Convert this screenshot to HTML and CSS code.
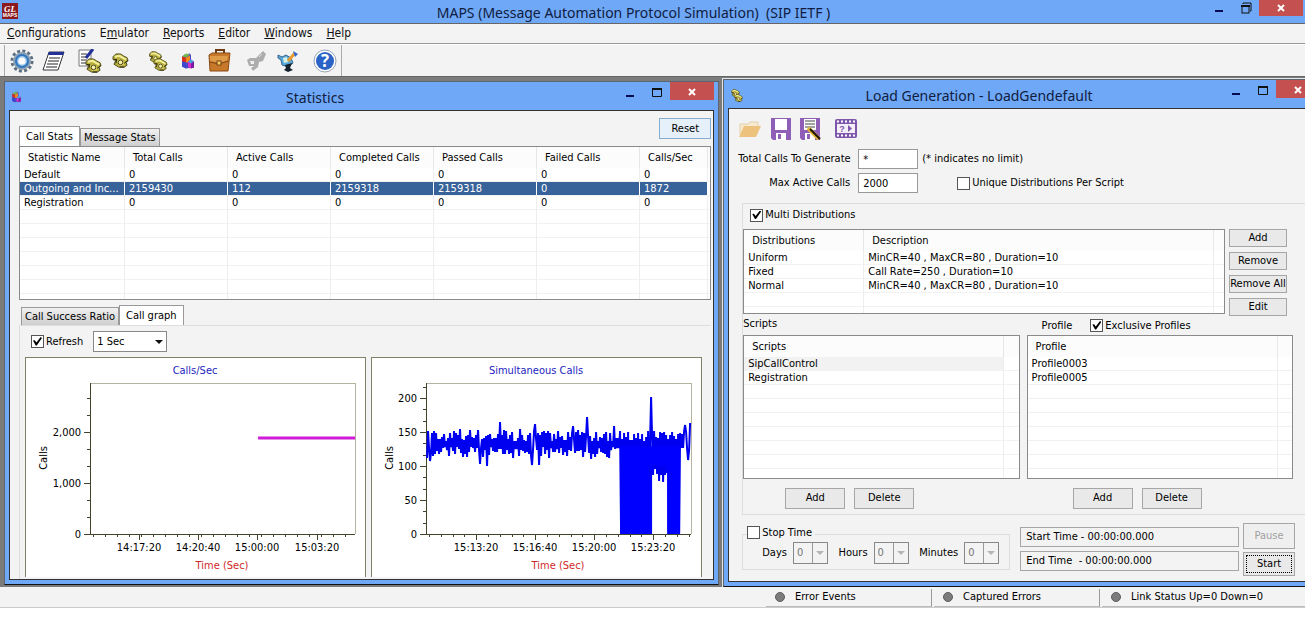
FILE: index.html
```html
<!DOCTYPE html>
<html lang="en">
<head>
    <meta charset="utf-8">
    <title>MAPS (Message Automation Protocol Simulation)</title>
    <link rel="stylesheet" href="styles.css">
</head>
<body>
    <!-- Shared icon shapes -->
    <svg class="symbols" width="0" height="0" aria-hidden="true">
        <symbol id="phone" viewBox="0 0 18 16">
            <path d="M1 4 L4 1 L9 1 L12 3 L16 5 L17 8 L15 10 L16 13 L13 15 L7 15 L2 12 L4 8 L1 7 Z" fill="#b8ae3c" stroke="#4b4718"/>
            <path d="M3 4 L8 3 L15 7" fill="none" stroke="#f4ef9c" stroke-width="2"/>
            <path d="M5 9 L8 6 L13 9 L13 13 L8 14 Z" fill="#d8cf60"/>
            <circle cx="9" cy="10" r="2.500" fill="#f6f0a8" stroke="#3b3810"/>
            <path d="M2 7 L5 7 L4 11 M13 11 L17 8 M8 15 L13 15" fill="none" stroke="#222008"/>
        </symbol>
        <symbol id="blocks" viewBox="0 0 14 17">
            <path d="M1 4 L4 2 L9 1 L10 3 L10 15 L5 16 L1 14 Z" fill="#4a46c8"/>
            <path d="M1 4 L5 5 L5 10 L1 9 Z" fill="#d82f20"/>
            <path d="M5 5 L9 3 L9 10 L5 10 Z" fill="#f08a1c"/>
            <path d="M1 4 L5 1 L9 2 L5 5 Z" fill="#72b84a"/>
            <path d="M1 9 L5 10 L5 16 L1 14 Z" fill="#3c48d0"/>
            <path d="M7 9 L10 7 L13 9 L13 15 L9 16 L7 14 Z" fill="#d630c8"/>
            <path d="M7 9 L10 7 L13 9 L10 11 Z" fill="#3ba8d8"/>
            <path d="M10 11 L13 9 L13 15 L10 16 Z" fill="#7a1aa0"/>
        </symbol>
    </svg>

    <header class="titlebar app-title">
        <svg class="app-logo" width="16" height="16" viewBox="0 0 16 16">
            <rect width="16" height="16" fill="#8b1a1f"/>
            <text class="logo-big" x="8" y="9" text-anchor="middle">GL</text>
            <text class="logo-small" x="8" y="14" text-anchor="middle">MAPS</text>
        </svg>
        <h1>MAPS (Message Automation Protocol Simulation)&nbsp; (SIP IETF )</h1>
        <div class="win-buttons">
            <button class="win-btn" aria-label="Minimize"><svg width="14" height="14"><path d="M3 10 H11" stroke="#0a0a50" stroke-width="2"/></svg></button>
            <button class="win-btn" aria-label="Restore"><svg width="14" height="14"><path d="M4 3 V2 H12 V10 H11" fill="none" stroke="#111"/><rect x="3" y="5" width="7" height="7" fill="none" stroke="#111"/><path d="M2 5 H11" stroke="#111" stroke-width="2"/></svg></button>
            <button class="win-btn close" aria-label="Close"><svg width="14" height="14"><path d="M4 4 L10 10 M10 4 L4 10" stroke="#fff" stroke-width="2"/></svg></button>
        </div>
    </header>

    <nav class="menubar">
        <a href="#"><u>C</u>onfigurations</a>
        <a href="#">E<u>m</u>ulator</a>
        <a href="#"><u>R</u>eports</a>
        <a href="#"><u>E</u>ditor</a>
        <a href="#"><u>W</u>indows</a>
        <a href="#"><u>H</u>elp</a>
    </nav>

    <div class="toolbar">
        <div class="tools">
            <div class="tool-group">
                <button aria-label="Settings">
                    <svg width="24" height="24" viewBox="0 0 24 24">
                        <circle cx="12" cy="12" r="10" fill="none" stroke="#5c6f80" stroke-width="3" stroke-dasharray="3 2.236"/>
                        <circle cx="12" cy="12" r="9" fill="#8fa3b5"/>
                        <circle cx="12" cy="12" r="7" fill="#2f78c0"/>
                        <circle cx="12" cy="12" r="5" fill="#9cc8ea"/>
                        <circle cx="12" cy="12" r="3.5" fill="#fff"/>
                    </svg>
                </button>
                <button aria-label="Script list">
                    <svg width="24" height="24" viewBox="0 0 24 24">
                        <path d="M8 3 L23 3 L17 21 L2 21 Z" fill="#fff" stroke="#33363c"/>
                        <path d="M8 3 L23 3 L22 6 L7 6 Z" fill="#23309a"/>
                        <path d="M8 9 H19 M7 12 H18 M6 15 H17 M5 18 H16" stroke="#222"/>
                    </svg>
                </button>
            </div>
            <div class="tool-group">
                <button aria-label="Edit call">
                    <svg width="24" height="24" viewBox="0 0 24 24">
                        <path d="M1 1 H13 V17 H1 Z" fill="#fff" stroke="#777"/>
                        <path d="M3 5 H9 M3 8 H8 M3 11 H9 M3 14 H8" stroke="#333"/>
                        <path d="M15 0 L8 9" stroke="#23309a" stroke-width="3"/>
                        <use href="#phone" x="7" y="9" width="17" height="15"/>
                    </svg>
                </button>
                <button aria-label="Call"><svg width="24" height="24"><use href="#phone" x="3" y="4" width="17" height="15"/></svg></button>
            </div>
            <div class="tool-group">
                <button aria-label="Load generation">
                    <svg width="24" height="24">
                        <use href="#phone" x="2" y="2" width="15" height="12"/>
                        <use href="#phone" x="7" y="9" width="15" height="13"/>
                    </svg>
                </button>
                <button aria-label="Statistics"><svg width="24" height="24"><use href="#blocks" x="4" y="3" width="14" height="18"/></svg></button>
                <button aria-label="Profiles">
                    <svg width="24" height="24" viewBox="0 0 24 24">
                        <path d="M8 5 V1 H16 V5" fill="none" stroke="#6b3a10" stroke-width="2"/>
                        <path d="M1 6 L4 4 H22 L20 22 H2 Z" fill="#c8782a" stroke="#8a4a14"/>
                        <path d="M2 7 H20 L19 12 L11 14 L2 12 Z" fill="#df9a48"/>
                        <path d="M2 13 L11 15 L20 12" fill="none" stroke="#7a4212"/>
                        <rect x="9" y="12" width="4" height="4" fill="#f3d060" stroke="#7a4212"/>
                    </svg>
                </button>
            </div>
            <div class="tool-group">
                <button aria-label="Stop events" disabled>
                    <svg width="24" height="24" viewBox="0 0 24 24">
                        <path d="M2 11 L5 9 H11 L18 2 L21 5 L18 12 L14 13 L13 18 L8 22 L6 19 L9 17 L4 17 Z" fill="#adadad"/>
                        <path d="M5 12 H9 L9 15 H6 Z" fill="#efefef"/>
                        <path d="M14 8 L17 5" fill="none" stroke="#dcdcdc"/>
                    </svg>
                </button>
                <button aria-label="Message events">
                    <svg width="24" height="24" viewBox="0 0 24 24">
                        <path d="M2 6 L6 8 L10 6 L15 9 L17 14 L12 18 L6 16 L5 11 L2 9 Z" fill="#58a8dc" stroke="#39678e"/>
                        <path d="M7 9 L11 8 L12 13 L8 14 Z" fill="#d7f0e4"/>
                        <path d="M12 12 L19 4" stroke="#e89c30" stroke-width="3"/>
                        <path d="M17 2 L22 5 L19 8 Z" fill="#2d68c8"/>
                        <path d="M9 16 L16 14 L14 19 L17 21 L12 23 L8 21 L10 19 Z" fill="#14202c"/>
                    </svg>
                </button>
            </div>
            <div class="tool-group">
                <button aria-label="Help">
                    <svg width="24" height="24" viewBox="0 0 24 24">
                        <circle cx="12" cy="12" r="11" fill="#fff" stroke="#93a3b8"/>
                        <circle cx="12" cy="12" r="9" fill="#2a62c6"/>
                        <text class="help-mark" x="12" y="18" text-anchor="middle">?</text>
                    </svg>
                </button>
            </div>
        </div>
    </div>

    <main class="workspace">
        <section class="window stats-window">
            <div class="titlebar">
                <svg class="win-icon" width="11" height="12"><use href="#blocks" width="11" height="12"/></svg>
                <h2>Statistics</h2>
                <div class="win-buttons">
                    <button class="win-btn" aria-label="Minimize"><svg width="14" height="14"><path d="M3 12 H11" stroke="#0a0a50" stroke-width="2"/></svg></button>
                    <button class="win-btn" aria-label="Maximize"><svg width="14" height="14"><path d="M2 5 H12" stroke="#111" stroke-width="2"/><path d="M2.5 5 V12.5 H11.5 V5" fill="none" stroke="#111"/></svg></button>
                    <button class="win-btn close" aria-label="Close"><svg width="14" height="14"><path d="M4 5 L10 11 M10 5 L4 11" stroke="#fff" stroke-width="2"/></svg></button>
                </div>
            </div>
            <div class="window-body stats-body">
                <div class="stats-top">
                    <div class="tabs">
                        <button class="tab active">Call Stats</button>
                        <button class="tab">Message Stats</button>
                    </div>
                    <button class="btn reset">Reset</button>
                </div>
                <div class="list stats-list">
                    <table>
                        <colgroup>
                            <col class="col-name"><col class="col-num"><col class="col-num"><col class="col-num"><col class="col-num"><col class="col-num"><col class="col-rate"><col>
                        </colgroup>
                        <thead>
                            <tr><th>Statistic Name</th><th>Total Calls</th><th>Active Calls</th><th>Completed Calls</th><th>Passed Calls</th><th>Failed Calls</th><th>Calls/Sec</th><th></th></tr>
                        </thead>
                        <tbody>
                            <tr><td>Default</td><td>0</td><td>0</td><td>0</td><td>0</td><td>0</td><td>0</td><td></td></tr>
                            <tr class="selected"><td>Outgoing and Inc...</td><td>2159430</td><td>112</td><td>2159318</td><td>2159318</td><td>0</td><td>1872</td><td></td></tr>
                            <tr><td>Registration</td><td>0</td><td>0</td><td>0</td><td>0</td><td>0</td><td>0</td><td></td></tr>
                            <tr class="filler"><td></td><td></td><td></td><td></td><td></td><td></td><td></td><td></td></tr>
                        </tbody>
                    </table>
                </div>
                <div class="tabs graph-tabs">
                    <button class="tab">Call Success Ratio</button>
                    <button class="tab active">Call graph</button>
                </div>
                <div class="graph-panel">
                    <div class="graph-options">
                        <label class="check"><input type="checkbox" checked>Refresh</label>
                        <span class="select">
                            <select aria-label="Refresh interval"><option>1 Sec</option></select>
                        </span>
                    </div>
                    <div class="charts">
                        <svg class="chart" id="calls-sec" viewBox="0 0 339 219"></svg>
                        <svg class="chart" id="simultaneous" viewBox="0 0 329 219"></svg>
                    </div>
                </div>
            </div>
        </section>

        <section class="window load-window">
            <div class="titlebar">
                <svg class="win-icon" width="14" height="13"><use href="#phone" x="1" width="9" height="8"/><use href="#phone" x="4" y="5" width="9" height="8"/></svg>
                <h2>Load Generation - LoadGendefault</h2>
                <div class="win-buttons">
                    <button class="win-btn" aria-label="Minimize"><svg width="14" height="14"><path d="M3 12 H11" stroke="#0a0a50" stroke-width="2"/></svg></button>
                    <button class="win-btn" aria-label="Maximize"><svg width="14" height="14"><path d="M2 5 H12" stroke="#111" stroke-width="2"/><path d="M2.5 5 V12.5 H11.5 V5" fill="none" stroke="#111"/></svg></button>
                    <button class="win-btn close" aria-label="Close"><svg width="14" height="14"><path d="M4 5 L10 11 M10 5 L4 11" stroke="#fff" stroke-width="2"/></svg></button>
                </div>
            </div>
            <div class="window-body load-body">
                <div class="file-tools">
                    <button aria-label="Open">
                        <svg width="24" height="22" viewBox="0 0 24 22">
                            <path d="M2 16 V6 H10 L12 4 H20 V8" fill="#f7ead2" stroke="#e3cfa8"/>
                            <path d="M6 8 H23 L18 19 H1 Z" fill="#edc27c"/>
                        </svg>
                    </button>
                    <button aria-label="Save">
                        <svg width="20" height="22" viewBox="0 0 20 22">
                            <path d="M0 0 H20 V22 H2 L0 20 Z" fill="#8f5fb8"/>
                            <rect x="4" y="1" width="12" height="11" fill="#fff"/>
                            <rect x="5" y="15" width="10" height="7" fill="#fff"/>
                            <rect x="7" y="16" width="3" height="5" fill="#8f5fb8"/>
                        </svg>
                    </button>
                    <button aria-label="Save as">
                        <svg width="22" height="22" viewBox="0 0 22 22">
                            <path d="M0 0 H20 V22 H2 L0 20 Z" fill="#8f5fb8"/>
                            <rect x="4" y="1" width="12" height="11" fill="#fff"/>
                            <path d="M5 3 H15 M5 6 H15 M5 9 H15" stroke="#444"/>
                            <rect x="5" y="15" width="10" height="7" fill="#fff"/>
                            <rect x="7" y="16" width="3" height="5" fill="#8f5fb8"/>
                            <path d="M8 10 L19 21" stroke="#e3b73a" stroke-width="4"/>
                            <path d="M10 11 L20 21" stroke="#1c1408" stroke-width="2"/>
                        </svg>
                    </button>
                    <button class="film" aria-label="Preview">
                        <svg width="22" height="20" viewBox="0 0 22 20">
                            <rect width="22" height="19" rx="2" fill="#7d57ac"/>
                            <path d="M2 2.5 H21 M2 16.5 H21" stroke="#fff" stroke-width="2" stroke-dasharray="2 2"/>
                            <rect x="2" y="5" width="18" height="9" fill="#f6f0fb"/>
                            <text class="film-mark" x="7" y="13" text-anchor="middle">?</text>
                            <path d="M13 6 L17 9.500 L13 13 Z" fill="#7d57ac"/>
                        </svg>
                    </button>
                </div>

                <div class="limits">
                    <label for="total-calls">Total Calls To Generate</label>
                    <input id="total-calls" class="field" type="text" value="*">
                    <span>(* indicates no limit)</span>
                    <label for="max-calls">Max Active Calls</label>
                    <input id="max-calls" class="field" type="text" value="2000">
                    <label class="check unique"><input type="checkbox">Unique Distributions Per Script</label>
                </div>

                <div class="group multi">
                    <label class="check"><input type="checkbox" checked>Multi Distributions</label>
                    <div class="distributions">
                        <div class="list">
                            <table>
                                <colgroup><col class="col-dist"><col class="col-desc"><col></colgroup>
                                <thead><tr><th>Distributions</th><th>Description</th><th></th></tr></thead>
                                <tbody>
                                    <tr><td>Uniform</td><td>MinCR=40 , MaxCR=80 , Duration=10</td><td></td></tr>
                                    <tr><td>Fixed</td><td>Call Rate=250 , Duration=10</td><td></td></tr>
                                    <tr><td>Normal</td><td>MinCR=40 , MaxCR=80 , Duration=10</td><td></td></tr>
                                    <tr class="filler"><td></td><td></td><td></td></tr>
                                </tbody>
                            </table>
                        </div>
                        <div class="side-buttons">
                            <button class="btn">Add</button>
                            <button class="btn">Remove</button>
                            <button class="btn">Remove All</button>
                            <button class="btn">Edit</button>
                        </div>
                    </div>
                    <div class="pair">
                        <div class="pane">
                            <div class="pane-head">Scripts</div>
                            <div class="list">
                                <table>
                                    <colgroup><col class="col-script"><col></colgroup>
                                    <thead><tr><th>Scripts</th><th></th></tr></thead>
                                    <tbody>
                                        <tr class="shaded"><td>SipCallControl</td><td></td></tr>
                                        <tr><td>Registration</td><td></td></tr>
                                        <tr class="filler"><td></td><td></td></tr>
                                    </tbody>
                                </table>
                            </div>
                            <div class="pane-buttons">
                                <button class="btn">Add</button>
                                <button class="btn">Delete</button>
                            </div>
                        </div>
                        <div class="pane profiles">
                            <div class="pane-head">
                                <span>Profile</span>
                                <label class="check"><input type="checkbox" checked>Exclusive Profiles</label>
                            </div>
                            <div class="list">
                                <table>
                                    <colgroup><col class="col-profile"><col></colgroup>
                                    <thead><tr><th>Profile</th><th></th></tr></thead>
                                    <tbody>
                                        <tr><td>Profile0003</td><td></td></tr>
                                        <tr><td>Profile0005</td><td></td></tr>
                                        <tr class="filler"><td></td><td></td></tr>
                                    </tbody>
                                </table>
                            </div>
                            <div class="pane-buttons">
                                <button class="btn">Add</button>
                                <button class="btn">Delete</button>
                            </div>
                        </div>
                    </div>
                </div>

                <div class="run-row">
                    <fieldset class="stop-time">
                        <legend><label class="check"><input type="checkbox">Stop Time</label></legend>
                        <label for="days">Days</label>
                        <span class="select small"><select id="days" disabled><option>0</option></select></span>
                        <label for="hours">Hours</label>
                        <span class="select small"><select id="hours" disabled><option>0</option></select></span>
                        <label for="minutes">Minutes</label>
                        <span class="select small"><select id="minutes" disabled><option>0</option></select></span>
                    </fieldset>
                    <div class="times">
                        <output class="time">Start Time - 00:00:00.000</output>
                        <output class="time">End Time&nbsp; - 00:00:00.000</output>
                    </div>
                    <div class="run-buttons">
                        <button class="btn" disabled>Pause</button>
                        <button class="btn start">Start</button>
                    </div>
                </div>
            </div>
        </section>
    </main>

    <footer class="statusbar">
        <div class="status"><i class="led"></i>Error Events</div>
        <div class="status"><i class="led"></i>Captured Errors</div>
        <div class="status last"><i class="led"></i>Link Status Up=0 Down=0</div>
    </footer>

    <script src="charts.js"></script>
</body>
</html>
```
FILE: styles.css
```css
* {
    box-sizing: border-box;
}

body {
    margin: 0;
    min-height: 100vh;
    display: flex;
    flex-direction: column;
    overflow-x: hidden;
    background: #fff;
    color: #000;
    font-family: "DejaVu Sans Condensed", "Open Sans", sans-serif;
    font-size: 11px;
    line-height: 14px;
}

button,
input,
select {
    font: inherit;
    color: inherit;
    margin: 0;
    border-radius: 0;
}

.symbols {
    position: absolute;
}

/* Title bars */
.titlebar {
    display: flex;
    align-items: flex-start;
    background: #6fa8f7;
    color: #101c40;
}

.titlebar h1,
.titlebar h2 {
    flex: 1;
    margin: 0;
    text-align: center;
    font-family: "Noto Sans", "Open Sans", sans-serif;
    font-weight: normal;
    font-size: 14px;
    line-height: 20px;
    white-space: nowrap;
}

.app-title {
    height: 24px;
    padding: 0 2px;
    border-bottom: 1px solid #666;
}

.app-title h1 {
    padding: 3px 0 0 44px;
}

.app-logo {
    margin-top: 3px;
}

.logo-big {
    font: italic bold 9px "Liberation Serif", serif;
    fill: #fff;
}

.logo-small {
    font: bold 5px "Liberation Sans", sans-serif;
    fill: #fff;
}

.win-buttons {
    display: flex;
}

.win-btn {
    width: 27px;
    height: 18px;
    padding: 0;
    border: 0;
    background: none;
    line-height: 0;
}

.win-btn.close {
    width: 44px;
    background: #c4504f;
}

.app-title .win-btn {
    height: 16px;
}

/* Menu and toolbar */
.menubar {
    display: flex;
    gap: 14px;
    height: 20px;
    padding: 2px 7px;
    background: #f3f3f3;
    border-bottom: 1px solid #999;
    font-size: 12px;
}

.menubar a {
    color: #111;
    text-decoration: none;
}

.toolbar {
    height: 33px;
    padding-left: 4px;
    background: #f3f3f3;
    border-top: 1px solid #fff;
    border-bottom: 1px solid #666;
}

.tools {
    display: inline-flex;
    align-items: center;
    gap: 13px;
    height: 31px;
    padding: 0 4px 0 5px;
    border-left: 1px solid #aaa;
    border-right: 1px solid #aaa;
}

.tool-group {
    display: flex;
    gap: 7px;
}

.tool-group button,
.file-tools button {
    padding: 0;
    border: 0;
    background: none;
    line-height: 0;
}

.help-mark {
    font: bold 17px "Open Sans", sans-serif;
    fill: #fff;
}

/* MDI area */
.workspace {
    display: flex;
    align-items: stretch;
    background: #7b7b7b;
    overflow: hidden;
}

.window {
    display: flex;
    flex-direction: column;
    background: #6fa8f7;
    border: 1px solid #5c6673;
    border-bottom-color: #111;
    padding: 0 4px 4px;
}

.stats-window {
    flex: 715 1 0;
    margin: 4px 4px 2px;
    min-width: 0;
}

/* this window runs past the right edge of the work area */
.load-window {
    flex: 600 1 0;
    min-width: 0;
    margin: 2px -20px 0 0;
    box-shadow: 0 0 0 1px #e4e4e4;
}

.window .titlebar {
    height: 28px;
}

.window h2 {
    padding: 6px 8px 0 0;
}

.win-icon {
    margin: 9px 0 0 2px;
}

.window-body {
    flex: 1;
    background: #f3f3f3;
    border: 1px solid #333;
}

/* Buttons and inputs */
.btn {
    padding: 0;
    border: 1px solid #a6a6a6;
    background: #e9e9e9;
    text-align: center;
    white-space: nowrap;
}

.btn:disabled {
    color: #a0a0a0;
    background: #efefef;
}

.check {
    display: inline-flex;
    align-items: center;
    gap: 2px;
    white-space: nowrap;
}

.check input {
    appearance: none;
    width: 13px;
    height: 13px;
    border: 1px solid #555;
    background: #fff;
}

.check input:checked::before {
    content: "";
    display: block;
    width: 9px;
    height: 9px;
    margin: 1px;
    background: #000;
    clip-path: polygon(0 40%, 20% 35%, 38% 60%, 85% 0, 100% 10%, 42% 95%, 30% 95%);
}

.select {
    position: relative;
    display: inline-block;
}

.select select {
    appearance: none;
    width: 74px;
    height: 21px;
    padding: 0 3px;
    border: 1px solid #888;
    background: #fff;
}

.select::after {
    content: "";
    position: absolute;
    right: 4px;
    top: 9px;
    border: 4px solid transparent;
    border-top-color: #111;
    border-bottom: 0;
    pointer-events: none;
}

.select.small select {
    width: 35px;
    height: 22px;
    color: #777;
    opacity: 1;
    background: linear-gradient(to right, #f3f3f3 18px, #999 18px, #999 19px, #f3f3f3 19px);
}

.select.small::after {
    border-top-color: #b5b5b5;
}

/* Tabs */
.tabs {
    display: flex;
    align-items: flex-end;
}

.tab {
    height: 18px;
    padding: 0 3px;
    border: 1px solid #999;
    border-bottom: 0;
    background: linear-gradient(#f0f0f0, #cfcfcf);
    white-space: nowrap;
}

.tab.active {
    height: 20px;
    padding: 0 6px;
    background: #fff;
}

/* List views */
.list {
    border: 1px solid #8a8a8a;
    background: #fff;
}

.list table {
    width: 100%;
    height: 100%;
    table-layout: fixed;
    border-spacing: 0;
}

.list th {
    height: 21px;
    padding: 1px 0 0 8px;
    border-right: 1px solid #e6e6e6;
    background: #fcfcfc;
    font-weight: normal;
    text-align: left;
    white-space: nowrap;
}

.list td {
    height: 14px;
    padding: 0 0 0 4px;
    border-right: 1px solid #eee;
    border-bottom: 1px solid #f2f2f2;
    line-height: 13px;
    white-space: nowrap;
    overflow: hidden;
}

.list th:last-child,
.list td:last-child {
    border-right: 0;
    padding: 0;
}

.list .filler td {
    height: auto;
    border-bottom: 0;
    background: repeating-linear-gradient(#fff 0, #fff 13px, #f2f2f2 13px, #f2f2f2 14px);
}

.list .selected td {
    background: #37629a;
    color: #fff;
    border-right-color: #fff;
}

.list .selected td:last-child {
    background: #fff;
}

.list .shaded td:first-child {
    background: #f2f2f2;
}

.col-name { width: 105px; }
.col-num { width: 103px; }
.col-rate { width: 68px; }
.col-dist { width: 120px; }
.col-desc { width: 350px; }
.col-script { width: 260px; }
.col-profile { width: 250px; }

/* Statistics window */
.stats-body {
    display: flex;
    flex-direction: column;
    padding: 7px 2px 0 9px;
}

.stats-top {
    display: flex;
    justify-content: space-between;
    height: 28px;
}

.reset {
    width: 52px;
    height: 21px;
    background: #e5f0fb;
    border-color: #86aed0;
}

.stats-list {
    height: 154px;
}

.graph-tabs {
    height: 25px;
    padding-left: 2px;
}

.graph-panel {
    flex: 1;
    border: 1px solid #ddd;
    border-width: 1px 0 0 1px;
    padding: 5px 9px 0 5px;
}

.graph-options {
    display: flex;
    gap: 10px;
    height: 26px;
    padding-left: 6px;
}

.graph-options .check {
    height: 21px;
}

.charts {
    display: grid;
    grid-template-columns: 341fr 331fr;
    gap: 5px;
}

.chart {
    display: block;
    width: 100%;
    background: #fff;
    border: 1px solid #7d8268;
    border-bottom: 0;
}

.chart text {
    font-size: 11px;
    text-anchor: middle;
}

.chart .tick-y {
    text-anchor: end;
}

.chart .chart-title {
    fill: #2424c0;
}

.chart .axis-title {
    fill: #d02828;
}

.chart .axis,
.chart .frame {
    fill: none;
    stroke: #44442c;
    shape-rendering: crispEdges;
}

.chart .frame {
    stroke: #b4b4a0;
}

/* Load generation window */
.load-window .window-body {
    padding: 8px 26px 0 9px;
}

.file-tools {
    display: flex;
    align-items: center;
    gap: 9px;
    height: 24px;
}

.file-tools .film {
    margin-left: 4px;
}

.film-mark {
    font: bold 9px "Liberation Sans", sans-serif;
    fill: #7d57ac;
}

.limits {
    display: grid;
    grid-template-columns: 112px 60px 1fr;
    align-items: center;
    gap: 4px 8px;
    margin-top: 8px;
    white-space: nowrap;
}

.limits > label {
    text-align: right;
}

.limits > span {
    margin-left: -4px;
}

.limits .unique {
    margin-left: 31px;
}

.field {
    width: 100%;
    height: 20px;
    padding: 0 4px;
    border: 1px solid #999;
    background: #fff;
}

.multi {
    margin: 10px -26px 0 4px;
    padding: 4px 26px 5px 0;
    border: 1px solid #dcdcdc;
    border-right: 0;
}

.multi > .check {
    padding-left: 7px;
}

.distributions {
    display: flex;
    gap: 4px;
    margin: 3px 6px 0 0;
}

.distributions .list {
    flex: 1;
    height: 85px;
}

.side-buttons {
    display: flex;
    flex-direction: column;
    justify-content: space-between;
    width: 58px;
    height: 88px;
}

.side-buttons .btn {
    height: 18px;
    line-height: 14px;
}

.pair {
    display: grid;
    grid-template-columns: 276fr 266fr;
    gap: 7px;
}

.pane-head {
    display: flex;
    gap: 18px;
    height: 18px;
}

.profiles .pane-head {
    align-items: center;
    padding-left: 15px;
}

.pane .list {
    height: 144px;
}

.pane-buttons {
    display: flex;
    justify-content: flex-start;
    gap: 9px;
    padding: 9px 0 0 42px;
}

.profiles .pane-buttons {
    padding-left: 46px;
}

.pane-buttons .btn {
    width: 60px;
    height: 21px;
}

.run-row {
    display: flex;
    align-items: flex-start;
    padding: 8px 0 5px 4px;
}

.stop-time {
    display: flex;
    align-items: center;
    width: 268px;
    height: 44px;
    margin: 3px 0 0;
    padding: 0 10px 6px 19px;
    border: 1px solid #dcdcdc;
}

.stop-time legend {
    margin-left: -15px;
    padding: 0 3px 0 0;
}

.stop-time > label {
    margin-right: 6px;
}

.stop-time .select {
    margin-right: auto;
}

.stop-time .select:last-child {
    margin-right: 0;
}

.times {
    display: flex;
    flex: 1;
    flex-direction: column;
    gap: 4px;
    padding: 4px 4px 0 10px;
}

.time {
    height: 20px;
    padding: 2px 5px;
    border: 1px solid #a6a6a6;
}

.run-buttons {
    display: flex;
    flex-direction: column;
    gap: 3px;
    width: 52px;
    margin-right: -2px;
}

.run-buttons .btn {
    height: 26px;
}

.run-buttons .start {
    height: 24px;
    outline: 1px dotted #000;
    outline-offset: -4px;
}

/* Status bar */
.statusbar {
    display: flex;
    justify-content: flex-end;
    gap: 2px;
    height: 21px;
    padding-top: 2px;
    background: #f3f3f3;
    border-bottom: 1px solid #ccc;
}

.status {
    display: flex;
    align-items: center;
    gap: 10px;
    width: 166px;
    padding-left: 9px;
    border-right: 1px solid #999;
    border-bottom: 1px solid #bbb;
    white-space: nowrap;
}

.status.last {
    width: 203px;
    border-right: 0;
}

.led {
    width: 10px;
    height: 10px;
    border-radius: 50%;
    background: #7c7c7c;
    border: 1px solid #5e5e5e;
}
```
FILE: charts.js
```js
const NS = 'http://www.w3.org/2000/svg';

function add(svg, tag, attrs, text) {
    const el = document.createElementNS(NS, tag);
    for (const key in attrs) {
        el.setAttribute(key, attrs[key]);
    }
    if (text) {
        el.textContent = text;
    }
    svg.appendChild(el);
}

// Frame, axes, ticks and labels
function drawAxes(svg, o) {
    const bottom = 176, top = 25;
    add(svg, 'text', { class: 'chart-title', x: o.center, y: 16 }, o.title);
    add(svg, 'path', { class: 'frame', d: `M${o.left} ${top} H${o.right} V${bottom}` });

    let d = `M${o.left} ${top} V${bottom} H${o.right}`;
    for (let y = bottom; y > top; y -= o.minorY) {
        d += ` M${o.left} ${Math.round(y)} h-3`;
    }
    for (let x = o.left + 3; x < o.right; x += o.minorX) {
        d += ` M${Math.round(x)} ${bottom} v3`;
    }
    o.yLabels.forEach(([y, text]) => {
        d += ` M${o.left} ${y} h-6`;
        add(svg, 'text', { class: 'tick-y', x: o.left - 9, y: y + 4 }, text);
    });
    o.xLabels.forEach(([x, text]) => {
        d += ` M${x} ${bottom} v6`;
        add(svg, 'text', { x: x, y: bottom + 17 }, text);
    });
    add(svg, 'path', { class: 'axis', d: d });

    add(svg, 'text', { transform: `translate(${o.nameX} 100) rotate(-90)` }, 'Calls');
    add(svg, 'text', { class: 'axis-title', x: o.timeX, y: 211 }, 'Time (Sec)');
}

const callsSec = document.getElementById('calls-sec');
drawAxes(callsSec, {
    title: 'Calls/Sec', center: 169, left: 64, right: 329, minorY: 17, minorX: 12,
    nameX: 21, timeX: 196,
    yLabels: [[74, '2,000'], [125, '1,000'], [176, '0']],
    xLabels: [[113, '14:17:20'], [172, '14:20:40'], [231, '15:00:00'], [291, '15:03:20']]
});
add(callsSec, 'path', { d: 'M232 80 H329', stroke: '#d01cd8', 'stroke-width': 3 });

const simultaneous = document.getElementById('simultaneous');
drawAxes(simultaneous, {
    title: 'Simultaneous Calls', center: 164, left: 54, right: 319, minorY: 11.33, minorX: 11.8,
    nameX: 21, timeX: 186,
    yLabels: [[40, '200'], [74, '150'], [108, '100'], [142, '50'], [176, '0']],
    xLabels: [[104, '15:13:20'], [163, '15:16:40'], [222, '15:20:00'], [281, '15:23:20']]
});

// Peaks and dips that stand out of the noise: x -> calls
const spikes = {
    56: 152, 58: 108, 108: 103, 115: 100, 128: 165, 160: 101, 163: 162, 167: 102,
    201: 159, 215: 172, 219: 110, 242: 159, 279: 201, 287: 78, 291: 77, 313: 161, 316: 109, 318: 163
};
let seed = 11;
function noise() {
    seed = (seed * 16807) % 2147483647;
    return seed / 2147483647;
}

let points = [];
for (let x = 55; x <= 318; x++) {
    let low = 112 + noise() * 16;
    let high = 136 + noise() * 18;
    if ((x >= 249 && x <= 279) || (x >= 296 && x <= 307)) {
        low = 1;
    } else if (x > 279 && x < 296) {
        low = 84 + noise() * 14;
    }
    let calls = x % 2 ? low : high;
    if (x in spikes) {
        calls = spikes[x];
    }
    points.push(x + ',' + Math.round(176 - calls * 0.68));
}
add(simultaneous, 'polyline', {
    points: points.join(' '), fill: 'none', stroke: '#0000f0', 'stroke-width': 2
});

// Dense stretches are solid down to the axis
add(simultaneous, 'path', { d: 'M248 88 H280 V176 H248 Z M280 88 H295 V108 H280 Z M295 88 H308 V176 H295 Z', fill: '#0000ff' });
```
